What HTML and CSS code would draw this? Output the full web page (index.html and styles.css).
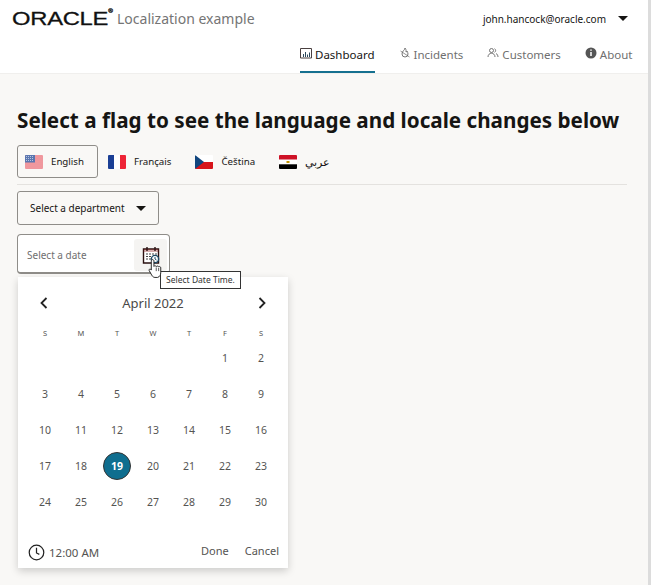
FILE: index.html
```html
<!DOCTYPE html>
<html lang="en">
<head>
<meta charset="utf-8">
<title>Localization example</title>
<link rel="stylesheet" href="styles.css">
</head>
<body>
<header class="header">
  <div class="top">
    <div class="brand">
      <span class="logo">ORACLE<sup class="reg">®</sup></span>
      <span class="app">Localization example</span>
    </div>
    <div class="user"><span>john.hancock@oracle.com</span><i class="caret"></i></div>
  </div>
  <nav class="nav">
    <a class="tab active">
      <svg class="ico" viewBox="0 0 12 12"><path d="M.5 1.500h11v9.500H.5z" fill="#fff" stroke="#4a4040" stroke-width="1"/><path d="M3.500 10V7M5.500 10V5M7.500 10V7.500M9.500 10V5.500" stroke="#2c4a5e" stroke-width="1"/></svg>Dashboard</a>
    <a class="tab">
      <svg class="ico" viewBox="0 0 12 12"><path d="M6 1c0 2-3 3-3 6a3 3 0 0 0 6 0c0-1-.5-2-1-3-.3 1-1 1-1 1 .3-2-.2-3-1-4z" fill="none" stroke="#666" stroke-width=".9"/><path d="M1.500 4l9 6" stroke="#666" stroke-width=".7"/></svg>Incidents</a>
    <a class="tab">
      <svg class="ico" viewBox="0 0 12 12"><circle cx="4.500" cy="3.500" r="2" fill="none" stroke="#666" stroke-width=".9"/><path d="M1 10c0-5 7-5 7 0M7.500 1.700a2 2 0 0 1 0 3.600M9 6.500c1.300.6 2 2 2 3.500" fill="none" stroke="#666" stroke-width=".9"/></svg>Customers</a>
    <a class="tab">
      <svg class="ico" viewBox="0 0 12 12"><circle cx="6" cy="6" r="5.500" fill="#555"/><path d="M6 5v4M6 2.500v1.300" stroke="#fff" stroke-width="1.500"/></svg>About</a>
  </nav>
</header>
<main class="main">
  <h1 class="title">Select a flag to see the language and locale changes below</h1>
  <div class="flags">
    <button class="flag selected">
      <svg class="flagimg" viewBox="0 0 18 14"><rect width="18" height="14" fill="#fff"/><path d="M0 1h18M0 3h18M0 5h18M0 7h18M0 9h18M0 11h18M0 13h18" stroke="#e0303c" stroke-width="1"/><rect width="10" height="7.500" fill="#5a76b0"/><path d="M1 1.500h8M1 3.500h8M1 5.500h8" stroke="#cfd8ea" stroke-width=".8" stroke-dasharray="1 1"/></svg>
      <span>English</span></button>
    <button class="flag">
      <svg class="flagimg" viewBox="0 0 18 14"><rect width="6" height="14" fill="#1b3f95"/><rect x="6" width="6" height="14" fill="#fff"/><rect x="12" width="6" height="14" fill="#ee2436"/></svg>
      <span>Français</span></button>
    <button class="flag">
      <svg class="flagimg" viewBox="0 0 18 14"><rect width="18" height="7" fill="#fff"/><rect y="7" width="18" height="7" fill="#d7141a"/><path d="M0 0l9 7-9 7z" fill="#11457e"/></svg>
      <span>Čeština</span></button>
    <button class="flag">
      <svg class="flagimg" viewBox="0 0 18 14"><rect width="18" height="4.700" fill="#ce1126"/><rect y="4.700" width="18" height="4.600" fill="#fff"/><rect y="9.300" width="18" height="4.700" fill="#000"/><rect x="7.500" y="6" width="3" height="2" fill="#c09300"/></svg>
      <span lang="ar" class="arabic">عربي</span></button>
  </div>
  <button class="select"><span>Select a department</span><i class="caret"></i></button>
  <div class="date">
    <span class="placeholder">Select a date</span>
    <span class="datebtn">
      <svg class="calico" viewBox="0 0 18 18"><path d="M1.500 3h15v14h-15z" fill="#fff" stroke="#2a1010" stroke-width="1.400"/><path d="M1.500 3h15v3h-15z" fill="#8b1a1a" opacity=".35"/><path d="M5 1v4M13 1v4" stroke="#2a1010" stroke-width="1.400"/><path d="M4 8h2M7 8h2M10 8h2M13 8h2M4 10.500h2M7 10.500h2M4 13h2M7 13h2" stroke="#444" stroke-width="1.200"/><circle cx="13" cy="13" r="3.600" fill="#fff" stroke="#1b4a66" stroke-width="1.400"/><path d="M13 11v2l1.500 1" fill="none" stroke="#1b4a66" stroke-width="1"/></svg>
    </span>
    <svg class="cursor" viewBox="0 0 14 20"><path d="M4 1.500c1 0 1.500.6 1.500 1.500v5c.3-.8 2-.8 2.300.2.400-.8 2-.7 2.200.3.500-.6 2-.4 2 .8v4.700c0 2-1 4-3 4.500H6.500c-1.500 0-2.300-1-3-2L1 12c-.6-1 .6-2 1.500-1.200L3 11.500V3c0-1 .4-1.500 1-1.500z" fill="#fff" stroke="#222" stroke-width=".9"/><path d="M7.700 9v3.500M10 9.500v3" stroke="#222" stroke-width=".7"/></svg>
    <div class="tooltip">Select Date Time.</div>
  </div>
  <section class="picker">
    <div class="month">
      <svg class="chev" viewBox="0 0 10 14"><path d="M7.500 2L2.500 7l5 5" fill="none" stroke="#222" stroke-width="1.800"/></svg>
      <span>April 2022</span>
      <svg class="chev" viewBox="0 0 10 14"><path d="M2.500 2l5 5-5 5" fill="none" stroke="#222" stroke-width="1.800"/></svg>
    </div>
    <div class="grid dow"><span>S</span><span>M</span><span>T</span><span>W</span><span>T</span><span>F</span><span>S</span></div>
    <div class="grid days">
      <span class="blank"></span><span class="blank"></span><span class="blank"></span><span class="blank"></span><span class="blank"></span><span>1</span><span>2</span>
      <span>3</span><span>4</span><span>5</span><span>6</span><span>7</span><span>8</span><span>9</span>
      <span>10</span><span>11</span><span>12</span><span>13</span><span>14</span><span>15</span><span>16</span>
      <span>17</span><span>18</span><span class="today">19</span><span>20</span><span>21</span><span>22</span><span>23</span>
      <span>24</span><span>25</span><span>26</span><span>27</span><span>28</span><span>29</span><span>30</span>
    </div>
    <div class="foot">
      <div class="time">
        <svg class="clock" viewBox="0 0 18 18"><circle cx="9" cy="9" r="7.700" fill="none" stroke="#222" stroke-width="1.300"/><path d="M9 4v5.500l3 1.500" fill="none" stroke="#222" stroke-width="1.300"/></svg>
        <span>12:00 AM</span>
      </div>
      <div class="actions"><span>Done</span><span>Cancel</span></div>
    </div>
  </section>
</main>
</body>
</html>
```
FILE: styles.css
```css
* { box-sizing: border-box; }
html, body { margin: 0; padding: 0; }
body {
  width: 651px;
  height: 585px;
  overflow: hidden;
  background: #f9f8f6;
  border-right: 3px solid #dcdcdc;
  font-family: "Noto Sans", "Open Sans", sans-serif;
  color: #161513;
}
.header { background: #fff; height: 74px; display: flex; flex-direction: column; border-bottom: 1px solid #f0efed; }
.top { height: 37px; display: flex; justify-content: space-between; align-items: center; padding: 0 20px 0 12px; }
.brand { display: flex; align-items: center; gap: 5px; }
.logo { font-family: "Liberation Sans", sans-serif; font-size: 19px; letter-spacing: -.2px; color: #111; transform: scaleX(1.25); transform-origin: left; width: 100px; -webkit-text-stroke: .3px #111; }
.reg { font-size: 5px; vertical-align: top; }
.app { font-size: 14px; color: #757575; }
.user { display: flex; align-items: center; gap: 12px; font-size: 10px; }
.caret { display: inline-block; width: 0; height: 0; border: 5px solid transparent; border-top: 5px solid #161513; border-bottom: 0; }
.nav { display: flex; justify-content: flex-end; gap: 24px; flex: 1; padding-right: 15.500px; }
.tab { display: flex; align-items: center; gap: 3px; font-size: 11.500px; color: #6f6f6f; height: 36px; padding-top: 1px; border-bottom: 2px solid transparent; }
.tab.active { color: #161513; border-bottom-color: #15708f; }
.ico { width: 12px; height: 12px; margin-bottom: 3px; }
.main { padding: 0 17px; position: relative; }
.title { margin: 33px 0 0; font-size: 20.660px; font-weight: 700; line-height: 26px; color: #161513; white-space: nowrap; }
.flags { display: flex; margin-top: 12px; padding-bottom: 6px; border-bottom: 1px solid #e4e2df; width: 610px; }
.flag { display: flex; align-items: center; gap: 8px; height: 33px; padding: 0 13px 0 7px; background: transparent; border: 1px solid transparent; border-radius: 3px; font: inherit; font-size: 9.700px; color: #161513; margin-right: 2px; }
.flag.selected { border-color: #8f8d89; }
.flagimg { width: 18px; height: 14px; border-radius: 1px; }
.arabic { font-size: 11px; }
.select { display: flex; align-items: center; justify-content: space-between; margin-top: 6px; width: 142px; height: 34px; padding: 0 12px; background: transparent; border: 1px solid #8f8d89; border-radius: 3px; font: inherit; font-size: 10px; color: #161513; }
.date { position: relative; display: flex; align-items: center; justify-content: space-between; margin-top: 9px; width: 153px; height: 40px; padding: 2px 2px 0 9px; background: #fff; border: 1px solid #8f8d89; border-bottom-width: 2px; border-radius: 4px; }
.placeholder { font-size: 10px; color: #6f6f6f; }
.datebtn { width: 33px; height: 32px; background: #f5f4f2; border-radius: 3px; display: flex; align-items: center; justify-content: center; }
.calico { width: 18px; height: 18px; }
.cursor { position: absolute; left: 130px; top: 23px; width: 15px; height: 21px; z-index: 3; }
.tooltip { position: absolute; left: 142px; top: 36px; width: 81px; height: 18px; background: #fff; border: 1px solid #333; font-size: 8.500px; line-height: 16px; text-align: center; white-space: nowrap; color: #333; z-index: 2; }
.picker { width: 270px; height: 291px; margin: 3px 0 0 1px; background: #fff; box-shadow: 0 3px 8px rgba(0,0,0,.18); padding: 0 9px; position: relative; }
.month { display: flex; justify-content: space-between; align-items: center; height: 51px; padding: 0 12px; font-size: 13px; color: #4a4947; }
.chev { width: 10px; height: 14px; }
.grid { display: grid; grid-template-columns: repeat(7, 36px); }
.grid span { display: flex; align-items: center; justify-content: center; color: #555452; }
.dow { height: 7px; font-size: 7.500px; }
.days { margin-top: 5px; grid-auto-rows: 36px; font-size: 10.500px; }
.days .today { width: 28px; height: 28px; margin: 4px 0 0 4px; background: #0f6e8f; border: 1.500px solid #333; border-radius: 50%; color: #fff; font-weight: 700; }
.foot { display: flex; justify-content: space-between; align-items: center; margin-top: 24px; padding: 0 0 0 1px; font-size: 11.500px; color: #555452; }
.time { display: flex; align-items: center; gap: 4px; }
.clock { width: 17px; height: 17px; }
.actions { display: flex; gap: 16px; margin-top: -5px; font-size: 11px; }
```
